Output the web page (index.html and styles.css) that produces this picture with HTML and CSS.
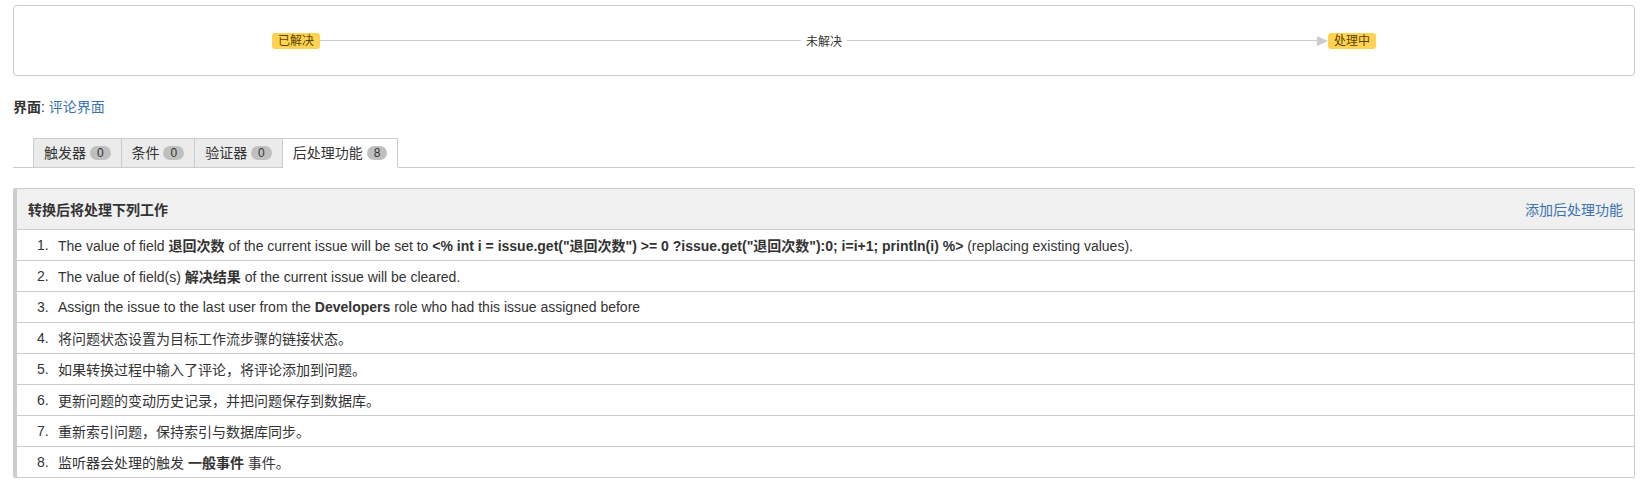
FILE: index.html
```html
<!DOCTYPE html>
<html>
	<head>
		<title>后处理功能</title>
		<meta charset="UTF-8">
		<link rel="stylesheet" href="styles.css">
	</head>
	<body class="cadru">
		<div class="diagrama">
			<span class="stare">已解决</span>
			<span class="segment"><span class="linie"></span></span>
			<span class="tranzitie">未解决</span>
			<span class="segment"><span class="linie"></span><span class="sageata"></span></span>
			<span class="stare">处理中</span>
		</div>

		<p class="ecran"><strong>界面</strong>: <a href="#">评论界面</a></p>

		<ul class="tabs">
			<li class="tab">触发器 <span class="badge">0</span></li>
			<li class="tab">条件 <span class="badge">0</span></li>
			<li class="tab">验证器 <span class="badge">0</span></li>
			<li class="tab activ">后处理功能 <span class="badge">8</span></li>
		</ul>

		<div class="panou">
			<div class="antet">
				<strong>转换后将处理下列工作</strong>
				<a href="#">添加后处理功能</a>
			</div>
			<ol class="lista">
				<li><span class="nr">1.</span><span>The value of field <b>退回次数</b> of the current issue will be set to <b>&lt;% int i = issue.get("退回次数") &gt;= 0 ?issue.get("退回次数"):0; i=i+1; println(i) %&gt;</b> (replacing existing values).</span></li>
				<li><span class="nr">2.</span><span>The value of field(s) <b>解决结果</b> of the current issue will be cleared.</span></li>
				<li><span class="nr">3.</span><span>Assign the issue to the last user from the <b>Developers</b> role who had this issue assigned before</span></li>
				<li><span class="nr">4.</span><span>将问题状态设置为目标工作流步骤的链接状态。</span></li>
				<li><span class="nr">5.</span><span>如果转换过程中输入了评论，将评论添加到问题。</span></li>
				<li><span class="nr">6.</span><span>更新问题的变动历史记录，并把问题保存到数据库。</span></li>
				<li><span class="nr">7.</span><span>重新索引问题，保持索引与数据库同步。</span></li>
				<li><span class="nr">8.</span><span>监听器会处理的触发 <b>一般事件</b> 事件。</span></li>
			</ol>
		</div>
	</body>
</html>
```

FILE: styles.css
```css
body, html {
	margin: 0;
}
.cadru {
	padding: 5px 13px;
	font-family: "Liberation Sans", "Noto Sans CJK SC", sans-serif;
	font-size: 14px;
	color: #333;
}
a {
	color: #3b73af;
	text-decoration: none;
}

.diagrama {
	display: flex;
	align-items: center;
	height: 69px;
	padding: 0 258px 0 258px;
	border: 1px solid #ccc;
	border-radius: 4px;
}
.stare {
	background-color: #ffd351;
	color: #594300;
	font-size: 12px;
	line-height: 16px;
	padding: 0 6px;
	border-radius: 3px;
}
.segment {
	flex: 1;
	display: flex;
	align-items: center;
}
.linie {
	flex: 1;
	height: 1px;
	background-color: #ccc;
}
.tranzitie {
	font-size: 12px;
	margin: 0 5px;
}
.sageata {
	width: 0;
	height: 0;
	border-top: 5px solid transparent;
	border-bottom: 5px solid transparent;
	border-left: 11px solid #ccc;
}

.ecran {
	margin: 21px 0 0 0;
	line-height: 20px;
}

.tabs {
	display: flex;
	list-style: none;
	margin: 21px 0 0 0;
	padding: 0 0 0 20px;
	border-bottom: 1px solid #ccc;
}
.tab {
	line-height: 28px;
	padding: 0 10px;
	margin-bottom: -1px;
	background-color: #ebebeb;
	border: 1px solid #ccc;
	border-left: none;
}
.tab:first-child {
	border-left: 1px solid #ccc;
}
.tab.activ {
	background-color: #fff;
	border-bottom-color: #fff;
}
.badge {
	display: inline-block;
	font-size: 12px;
	line-height: 14px;
	padding: 0 7px;
	border-radius: 8px;
	background-color: #bfbfbf;
	color: #333;
	vertical-align: 1px;
}

.panou {
	margin-top: 20px;
	border: 1px solid #ccc;
	border-left: 4px solid #ccc;
	border-radius: 2px;
}
.antet {
	display: flex;
	justify-content: space-between;
	align-items: center;
	height: 40px;
	padding: 0 11px;
	background-color: #f0f0f0;
	border-bottom: 1px solid #ccc;
}
.lista {
	list-style: none;
	margin: 0;
	padding: 0;
}
.lista li {
	display: flex;
	align-items: center;
	height: 30px;
	padding-left: 20px;
}
.lista li + li {
	border-top: 1px solid #ccc;
}
.nr {
	width: 21px;
	flex: none;
}
```
